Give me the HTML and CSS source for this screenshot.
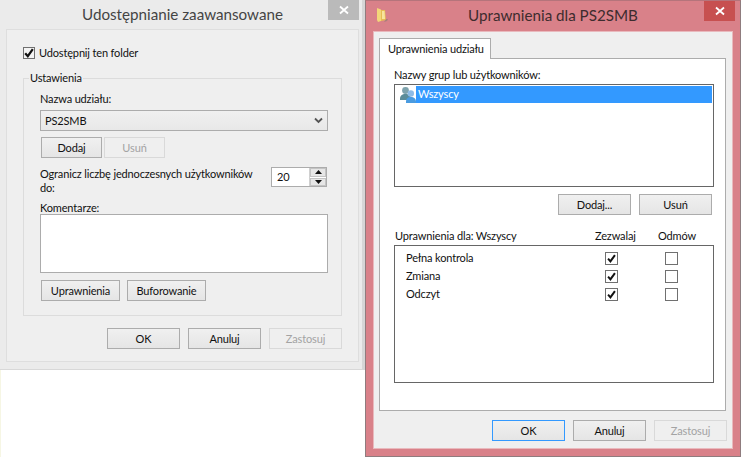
FILE: index.html
```html
<!DOCTYPE html>
<html lang="pl">
<head>
<meta charset="utf-8">
<title>Udostępnianie zaawansowane</title>
<link rel="stylesheet" href="styles.css">
</head>
<body>
<div class="desktop">
  <section class="window window-share">
    <header class="titlebar">
      <span></span>
      <h1 class="title">Udostępnianie zaawansowane</h1>
      <span class="close close-idle"><svg width="10" height="10" viewBox="0 0 10 10"><path d="M1 1.5 9 8.5M9 1.5 1 8.5" stroke="#fff" stroke-width="1.8" fill="none"/></svg></span>
    </header>
    <div class="client share-client">
      <label class="check-row">
        <span class="check check-main"><svg width="10" height="10" viewBox="0 0 10 10"><path d="M1.2 5.2 3.8 8.2 8.8 1.2" stroke="#111" stroke-width="2.2" fill="none"/></svg></span>
        <span>Udostępnij ten folder</span>
      </label>
      <fieldset class="group">
        <legend>Ustawienia</legend>
        <div class="text-line">Nazwa udziału:</div>
        <div class="combo">
          <span>PS2SMB</span>
          <svg width="9" height="7" viewBox="0 0 9 7"><path d="M1 1.5 4.5 5 8 1.5" stroke="#555" stroke-width="1.8" fill="none"/></svg>
        </div>
        <div class="btn-row share-btns">
          <button class="btn small">Dodaj</button>
          <button class="btn small disabled">Usuń</button>
        </div>
        <div class="limit">
          <div class="limit-text">Ogranicz liczbę jednoczesnych użytkowników do:</div>
          <div class="spin">
            <span class="spin-value">20</span>
            <span class="spin-btns">
              <span class="spin-btn"><svg width="7" height="4" viewBox="0 0 7 4"><path d="M3.5 0 7 4H0z" fill="#111"/></svg></span>
              <span class="spin-btn"><svg width="7" height="4" viewBox="0 0 7 4"><path d="M0 0h7L3.5 4z" fill="#111"/></svg></span>
            </span>
          </div>
        </div>
        <div class="text-line comment-label">Komentarze:</div>
        <div class="textarea"></div>
        <div class="btn-row bottom-btns">
          <button class="btn perm">Uprawnienia</button>
          <button class="btn cache">Buforowanie</button>
        </div>
      </fieldset>
      <div class="footer share-footer">
        <button class="btn wide">OK</button>
        <button class="btn wide">Anuluj</button>
        <button class="btn wide disabled">Zastosuj</button>
      </div>
    </div>
  </section>

  <section class="window window-perm">
    <header class="titlebar">
      <span class="folder"><svg width="12" height="16" viewBox="0 0 12 16"><path d="M1 1 5 2.500V14L2 15 1 13z" fill="#f3d679"/><path d="M5 3H9L10 13 5 14z" fill="#e6bd55"/><path d="M6 4H8.500L9 12H6z" fill="#f7e59d"/><path d="M10 12 12 12 11 14 8 15z" fill="#a8807a"/></svg></span>
      <h2 class="title">Uprawnienia dla PS2SMB</h2>
      <span class="close close-active"><svg width="10" height="10" viewBox="0 0 10 10"><path d="M1 1.5 9 8.5M9 1.5 1 8.5" stroke="#fff" stroke-width="1.8" fill="none"/></svg></span>
    </header>
    <div class="client perm-client">
      <div class="tab">Uprawnienia udziału</div>
      <div class="panel">
        <div class="text-line">Nazwy grup lub użytkowników:</div>
        <div class="listbox">
          <div class="list-row">
            <svg class="users" width="16" height="17" viewBox="0 0 16 17">
              <circle cx="5.500" cy="4.500" r="3.400" fill="#7ea3ad"/>
              <path d="M0 13c0-3.500 2-5 5.500-5S11 9.500 11 13v1H0z" fill="#5a8c99"/>
              <circle cx="10.800" cy="7.500" r="3.200" fill="#8dbbe6"/>
              <path d="M6 16c0-3.500 1.500-5 4.800-5s5.200 1.500 5.200 5v1H6z" fill="#4a9be0"/>
            </svg>
            <span class="selected">Wszyscy</span>
          </div>
        </div>
        <div class="footer list-btns">
          <button class="btn wide">Dodaj...</button>
          <button class="btn wide">Usuń</button>
        </div>
        <div class="perm-head">
          <span>Uprawnienia dla: Wszyscy</span>
          <span>Zezwalaj</span>
          <span>Odmów</span>
        </div>
        <div class="perm-list">
          <div class="perm-row">
            <span>Pełna kontrola</span>
            <span class="check"><svg width="9" height="9" viewBox="0 0 10 10"><path d="M1.200 5.200 3.800 8.200 8.800 1.200" stroke="#111" stroke-width="2.200" fill="none"/></svg></span>
            <span class="check"></span>
          </div>
          <div class="perm-row">
            <span>Zmiana</span>
            <span class="check"><svg width="9" height="9" viewBox="0 0 10 10"><path d="M1.200 5.200 3.800 8.200 8.800 1.200" stroke="#111" stroke-width="2.200" fill="none"/></svg></span>
            <span class="check"></span>
          </div>
          <div class="perm-row">
            <span>Odczyt</span>
            <span class="check"><svg width="9" height="9" viewBox="0 0 10 10"><path d="M1.200 5.200 3.800 8.200 8.800 1.200" stroke="#111" stroke-width="2.200" fill="none"/></svg></span>
            <span class="check"></span>
          </div>
        </div>
      </div>
      <div class="footer perm-footer">
        <button class="btn wide default">OK</button>
        <button class="btn wide">Anuluj</button>
        <button class="btn wide disabled">Zastosuj</button>
      </div>
    </div>
  </section>
</div>
</body>
</html>
```
FILE: styles.css
```css
* { box-sizing: border-box; }
html, body { margin: 0; padding: 0; background: #fff; overflow: hidden; }
body { font-family: Lato, Roboto, "Liberation Sans", sans-serif; font-size: 11px; letter-spacing: -0.15px; line-height: 16px; color: #111; }
.desktop { position: relative; width: 741px; height: 457px; border-left: 1px solid #f6f6e4; }

.window { position: absolute; top: 0; }
.window-share { left: -1px; width: 365px; height: 370px; padding: 0 3px 0 6px; background: #ebebeb; border-right: 3px solid #d6d6d6; border-bottom: 1px solid #d8d8d8; }
.window-perm { left: 364px; width: 376px; height: 457px; padding: 0 7px; background: #d98189; border: 1px solid #8f7c7e; border-top-color: #b5747b; }

.titlebar { display: grid; grid-template-columns: 1fr auto 1fr; align-items: start; }
.window-share .titlebar { height: 29px; }
.window-perm .titlebar { height: 30px; }
.title { margin: 0; font-size: 15.200px; letter-spacing: 0; line-height: 29px; font-weight: 400; white-space: nowrap; }
.window-share .title { color: #444; }
.window-perm .title { color: #3d2c2e; }
.close { justify-self: end; width: 31px; height: 20px; display: flex; align-items: center; justify-content: center; }
.close-idle { background: #bababa; }
.close-active { background: #c75050; margin-right: -2px; }
.folder { padding: 6px 0 0 3px; height: 24px; }

.client { background: #efefef; }
.share-client { height: 333px; border: 1px solid #dedede; padding: 15px 16px 0; }
.perm-client { height: 418px; border: 1px solid #e9b9bd; padding: 6px 5px 0; }

.check-row { display: flex; align-items: center; height: 16px; gap: 4px; }
.check { width: 13px; height: 13px; background: #fff; border: 1px solid #707070; display: flex; align-items: center; justify-content: center; }
.check-main { width: 12px; height: 12px; background: #f4f4f4; }
.text-line { height: 16px; white-space: nowrap; }

.group { margin: 9px 0 0; padding: 5px 13px 14px 16px; width: 319px; height: 246px; border: 1px solid #dcdcdc; }
.group legend { padding: 0 1px; margin-left: -11px; line-height: 16px; }

.combo { margin-top: 3px; width: 288px; height: 21px; padding: 0 4px; border: 1px solid #acacac; background: linear-gradient(#f0f0f0, #e8e8e8); display: flex; align-items: center; justify-content: space-between; }
.btn-row { display: flex; margin-left: 1px; }
.btn { height: 21px; padding: 0; font: inherit; letter-spacing: inherit; color: #111; border: 1px solid #acacac; background: linear-gradient(#f0f0f0, #e5e5e5); }
.btn.disabled { color: #a3a3a3; border-color: #d9d9d9; background: #efefef; }
.btn.default { border-color: #3399ff; }
.small { width: 61px; }
.share-btns { margin-top: 6px; gap: 2px; }
.limit { margin-top: 9px; display: flex; justify-content: space-between; align-items: flex-start; width: 287px; }
.limit-text { width: 222px; line-height: 14px; }
.spin { width: 56px; height: 20px; border: 1px solid #acacac; background: #fff; display: flex; }
.spin-value { flex: 1; padding-left: 5px; line-height: 18px; }
.spin-btns { width: 17px; border-left: 1px solid #d0d0d0; display: flex; flex-direction: column; gap: 1px; }
.spin-btn { flex: 1; display: flex; align-items: center; justify-content: center; background: #e6e6e6; border: 1px solid #c4c4c4; }
.comment-label { margin-top: 5px; }
.textarea { margin-top: -2px; width: 288px; height: 59px; background: #fff; border: 1px solid #acacac; }
.bottom-btns { margin-top: 7px; }
.perm { width: 79px; }
.cache { width: 79px; margin-left: 7px; }

.footer { display: flex; justify-content: flex-end; gap: 8px; }
.wide { width: 73px; }
.share-footer { margin-top: 12px; }
.perm-footer { margin-top: 9px; }

.tab { position: relative; width: 112px; height: 21px; margin-bottom: -1px; padding-left: 8px; line-height: 19px; background: #fff; border: 1px solid #acacac; border-bottom: 0; white-space: nowrap; }
.panel { width: 347px; height: 353px; padding: 8px 0 0 14px; background: #fff; border: 1px solid #acacac; }
.listbox { margin-top: 1px; width: 320px; height: 103px; padding: 1px 1px 0 5px; border: 1px solid #666; }
.list-row { display: flex; align-items: flex-start; height: 17px; }
.users { flex: none; }
.selected { flex: 1; height: 17px; padding-left: 2px; background: #3399ff; color: #fff; }
.list-btns { margin-top: 7px; width: 318px; }
.perm-head { margin-top: 13px; padding-left: 1px; display: grid; grid-template-columns: 200px 63px auto; }
.perm-list { margin-top: 1px; width: 320px; height: 138px; padding: 3px 0 0 11px; border: 1px solid #666; }
.perm-row { height: 18px; display: grid; grid-template-columns: 199px 60px 13px; align-items: center; }
```
